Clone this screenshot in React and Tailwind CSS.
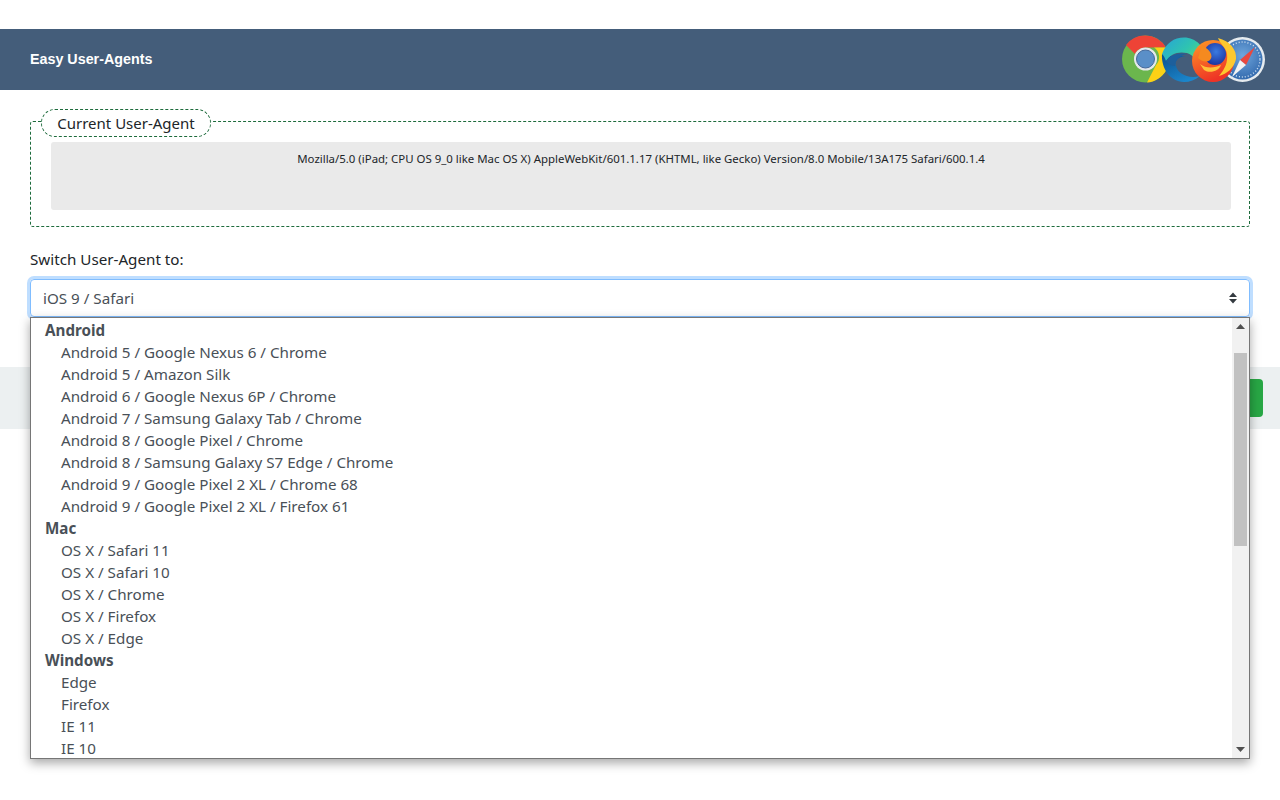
import React from 'react';

const groups = [
    {
        label: 'Android',
        options: [
            'Android 5 / Google Nexus 6 / Chrome',
            'Android 5 / Amazon Silk',
            'Android 6 / Google Nexus 6P / Chrome',
            'Android 7 / Samsung Galaxy Tab / Chrome',
            'Android 8 / Google Pixel / Chrome',
            'Android 8 / Samsung Galaxy S7 Edge / Chrome',
            'Android 9 / Google Pixel 2 XL / Chrome 68',
            'Android 9 / Google Pixel 2 XL / Firefox 61',
        ],
    },
    { label: 'Mac', options: ['OS X / Safari 11', 'OS X / Safari 10', 'OS X / Chrome', 'OS X / Firefox', 'OS X / Edge'] },
    { label: 'Windows', options: ['Edge', 'Firefox', 'IE 11', 'IE 10'] },
];

const BrowserLogos = () => (
    <svg width="146" height="51" viewBox="0 0 146 51" className="block">
        <defs>
            <linearGradient id="edgeTop" x1="0" y1="0" x2="1" y2="0.7">
                <stop offset="0" stopColor="#27a3d8" />
                <stop offset="0.55" stopColor="#2fc4b0" />
                <stop offset="1" stopColor="#5fdc6e" />
            </linearGradient>
            <linearGradient id="edgeLow" x1="0" y1="0" x2="0.6" y2="1">
                <stop offset="0" stopColor="#0c4f8c" />
                <stop offset="1" stopColor="#1b86cc" />
            </linearGradient>
            <radialGradient id="foxBall" cx="0.55" cy="0.4" r="0.65">
                <stop offset="0" stopColor="#3a7be0" />
                <stop offset="1" stopColor="#1a2f9c" />
            </radialGradient>
            <linearGradient id="foxFire" x1="0" y1="0" x2="0.4" y2="1">
                <stop offset="0" stopColor="#ff9a26" />
                <stop offset="1" stopColor="#ee3326" />
            </linearGradient>
            <radialGradient id="safariFace" cx="0.5" cy="0.4" r="0.65">
                <stop offset="0" stopColor="#6fa6dc" />
                <stop offset="1" stopColor="#2f66ab" />
            </radialGradient>
        </defs>

        {/* safari */}
        <circle cx="122.5" cy="25.5" r="22.5" fill="#e6ebef" />
        <circle cx="122.5" cy="25.5" r="20" fill="url(#safariFace)" />
        <circle cx="122.5" cy="25.5" r="17.5" fill="none" stroke="#cfe0f0" strokeWidth="1.5" strokeDasharray="1 2" />
        <path d="M135 13 L120 26 L126 31 Z" fill="#e8483f" />
        <path d="M112 43 L120 26 L126 31 Z" fill="#f2f2f2" />

        {/* chrome */}
        <circle cx="25.5" cy="25" r="23.5" fill="#6bb64d" />
        <path d="M25.5 1.500 A23.5 23.5 0 0 1 46 13.500 L25.500 13.500 A11.500 11.500 0 0 0 15 20 L6 11 A23.500 23.500 0 0 1 25.500 1.500 Z" fill="#ee4336" />
        <path d="M46 13.500 A23.500 23.500 0 0 1 27 48.500 L36 31 A11.500 11.500 0 0 0 34 13.500 Z" fill="#fcd116" />
        <circle cx="25.5" cy="25" r="11.5" fill="#e4e8ec" />
        <circle cx="25.5" cy="25" r="9" fill="#5a8fc8" stroke="#44689a" strokeWidth="1" />

        {/* edge */}
        <path d="M42 20 C41 34 50 48 64 48 C70 48 75 46 80 42 C68 45 58 40 56 32 C54 27 58 23 66 22 L48 22 Z" fill="url(#edgeLow)" />
        <path d="M42 20 C46 9 54 3.500 64 3.500 C76 3.500 85 13 86 25 C86 31 80 34 74 33 C77 27 74 21 67 19 C58 17 50 20 46 27 C45 24 44 22 42 20 Z" fill="url(#edgeTop)" />
        <path d="M46 27 C50 21 58 18 67 20 C60 21 55 26 55 32 C52 32 48 30 46 27 Z" fill="#1d5f9c" />

        {/* firefox */}
        <circle cx="93" cy="27" r="21" fill="url(#foxFire)" />
        <circle cx="95" cy="20" r="11" fill="url(#foxBall)" />
        <path d="M82 10 C84 14 88 14 90 18 C92 21 92 24 90 26 C86 29 81 27 78 24 C80 20 80 15 82 10 Z" fill="#f58a1f" />
        <path d="M80 30 C86 35 95 34 101 31 C99 37 90 40 84 36 Z" fill="#ffc13a" />
        <path d="M98 4 C110 7 117 16 116 25 C114 34 107 40 99 42 C105 35 108 28 107 20 C106 13 100 10 98 4 Z" fill="#fdc82f" />
    </svg>
);

const SelectArrows = () => (
    <svg width="8" height="12" viewBox="0 0 8 12" className="block">
        <path d="M4 0.5 L8 5 L0 5 Z M4 11.5 L8 7 L0 7 Z" fill="#343a40" />
    </svg>
);

const OptionList = () => (
    <div className="absolute left-0 right-0 top-[38px] z-10 flex h-[442px] border border-[#767676] bg-white shadow-[0_4px_10px_rgba(0,0,0,0.35)]">
        <div className="flex-1 overflow-hidden pt-px text-[#495057]">
            {groups.map((group) => (
                <div key={group.label}>
                    <div className="h-[22px] pl-[14px] font-bold leading-[22px]">{group.label}</div>
                    {group.options.map((option) => (
                        <div key={option} className="h-[22px] pl-[30px] leading-[22px]">{option}</div>
                    ))}
                </div>
            ))}
        </div>
        <div className="flex w-[17px] flex-col items-center bg-[#f1f1f1]">
            <div className="flex h-[17px] items-center justify-center">
                <svg width="9" height="5" viewBox="0 0 9 5"><path d="M4.5 0 L9 5 L0 5 Z" fill="#505050" /></svg>
            </div>
            <div className="mt-[18px] h-[193px] w-[13px] bg-[#c1c1c1]" />
            <div className="flex-1" />
            <div className="flex h-[17px] items-center justify-center">
                <svg width="9" height="5" viewBox="0 0 9 5"><path d="M0 0 L9 0 L4.5 5 Z" fill="#505050" /></svg>
            </div>
        </div>
    </div>
);

export default function App() {
    return (
        <div className="min-h-[800px] bg-white pt-[29px] font-['Noto_Sans',sans-serif] text-[15.2px] text-[#212529]">
            <header className="flex h-[61px] items-center justify-between bg-[#445d7a] pl-[30px] pr-[14px]">
                <span className="font-['Liberation_Sans',sans-serif] text-[14.3px] font-bold text-white">Easy User-Agents</span>
                <BrowserLogos />
            </header>

            <main className="px-[30px] pt-[19px]">
                <fieldset className="h-[118px] rounded-[3px] border border-dashed border-[#1d6b3c] pl-5 pr-[18px]">
                    <legend className="ml-[-10px] h-[25px] w-[170px]">
                        <span className="block h-7 rounded-[14px] border border-dashed border-[#1d6b3c] text-center text-[15px] leading-[27px]">Current User-Agent</span>
                    </legend>
                    <div className="mt-2 h-[68px] rounded-[3px] bg-[#eaeaea] pt-2 text-center text-[11.43px] leading-[17px]">
                        Mozilla/5.0 (iPad; CPU OS 9_0 like Mac OS X) AppleWebKit/601.1.17 (KHTML, like Gecko) Version/8.0 Mobile/13A175 Safari/600.1.4
                    </div>
                </fieldset>

                <div className="mt-[21px] h-[22px] leading-[22px]">Switch User-Agent to:</div>

                <div className="relative mt-[9px]">
                    <div className="flex h-[38px] items-center justify-between rounded border border-[#80bdff] pl-3 pr-3 text-[#495057] shadow-[0_0_0_3px_rgba(128,189,255,0.5)]">
                        <span>iOS 9 / Safari</span>
                        <SelectArrows />
                    </div>
                    <OptionList />
                </div>
            </main>

            <div className="mt-[50px] flex h-[62px] items-center justify-end bg-[#ecf0f1] pr-[17px]">
                <button className="h-[38px] w-[120px] rounded bg-[#28a745]" />
            </div>
        </div>
    );
}
